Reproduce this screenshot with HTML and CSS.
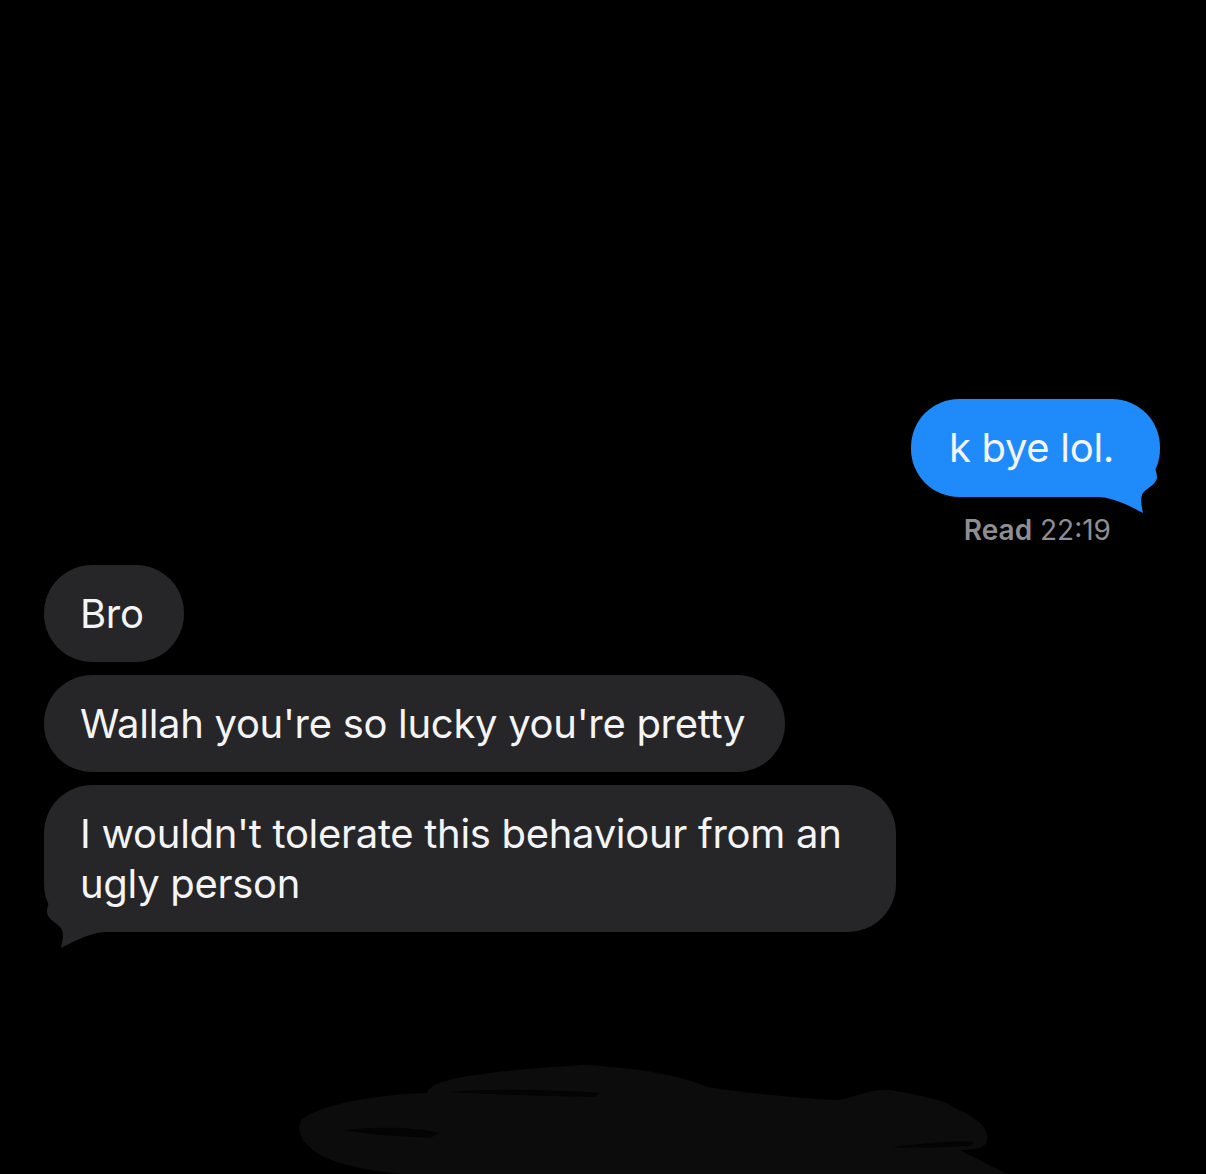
FILE: index.html
```html
<!DOCTYPE html>
<html lang="en">
<head>
  <meta charset="UTF-8">
  <meta name="viewport" content="width=device-width, initial-scale=1.0">
  <title>Messages</title>
  <link rel="stylesheet" href="styles.css">
</head>
<body>
  <div class="thread">
    <div class="bubble sent">
      k bye lol.
      <svg class="tail" viewBox="0 0 60 80" width="60" height="80">
        <path d="M20 10 C45 14 57 28 57 40 C57 48 44 52 42 58 C40 64 42 70 43 76 C33 71 18 62 0 60 L0 10 Z"/>
      </svg>
    </div>
    <div class="receipt"><b>Read</b> 22:19</div>

    <div class="received-group">
      <div class="bubble received">Bro</div>
      <div class="bubble received">Wallah you're so lucky you're pretty</div>
      <div class="bubble received last">
        I wouldn't tolerate this behaviour from an ugly person
        <svg class="tail" viewBox="0 0 60 80" width="60" height="80">
          <path d="M20 10 C45 14 57 28 57 40 C57 48 44 52 42 58 C40 64 42 70 43 76 C33 71 18 62 0 60 L0 10 Z"/>
        </svg>
      </div>
    </div>
  </div>

  <!-- redaction scribble -->
  <svg class="scribble" viewBox="0 0 1206 124" width="1206" height="124">
    <path class="ink" d="M300 73 C305 60 360 45 427 43 C430 30 470 22 583 15 C640 18 680 25 707 37 C760 45 820 50 840 50 C860 45 875 38 890 40 C920 45 950 52 953 57 C970 65 990 75 987 90 C987 98 975 100 960 100 C975 108 995 118 1007 124 L400 124 C360 120 320 110 310 97 C300 90 298 80 300 73 Z"/>
    <path class="gap" d="M343 80 C380 76 420 78 440 83 L430 88 C400 86 370 85 343 80 Z"/>
    <path class="gap" d="M450 42 C500 38 560 40 600 43 L595 47 C550 46 500 45 450 42 Z"/>
    <path class="gap" d="M893 97 C920 94 950 90 975 92 L970 96 C945 97 915 99 893 97 Z"/>
  </svg>
</body>
</html>
```

FILE: styles.css
```css
body {
  margin: 0;
  height: 1174px;
  overflow: hidden;
  background-color: #000;
  font-family: Inter, "Liberation Sans", Arial, sans-serif;
  position: relative;
}
.thread {
  display: flex;
  flex-direction: column;
  align-items: flex-start;
  padding: 399px 46px 0 44px;
}
.bubble {
  position: relative;
  z-index: 0;
  max-width: 852px;
  box-sizing: border-box;
  padding: 24px 40px 23px 36px;
  border-radius: 48px;
  font-size: 40px;
  line-height: 50px;
  letter-spacing: -0.3px;
  color: #f4f4f6;
}
.bubble .tail {
  position: absolute;
  z-index: -1;
  bottom: -20px;
  overflow: visible;
}
.sent {
  align-self: flex-end;
  background-color: #1f8bfb;
  padding: 24px 46px 24px 38px;
}
.sent .tail {
  right: 0;
  fill: #1f8bfb;
}
.receipt {
  align-self: flex-end;
  margin: 16px 49px 0 0;
  font-size: 28px;
  line-height: 34px;
  color: #8e8e93;
}
.receipt b {
  font-weight: 600;
}
.received-group {
  display: flex;
  flex-direction: column;
  align-items: flex-start;
  gap: 13px;
  margin-top: 18px;
}
.received {
  background-color: #262628;
}
.received.last {
  padding-right: 40px;
}
.received .tail {
  left: 0;
  fill: #262628;
  transform: scaleX(-1);
}
.scribble {
  position: absolute;
  left: 0;
  top: 1050px;
}
.scribble .ink {
  fill: #0c0c0c;
}
.scribble .gap {
  fill: #040404;
}
```
